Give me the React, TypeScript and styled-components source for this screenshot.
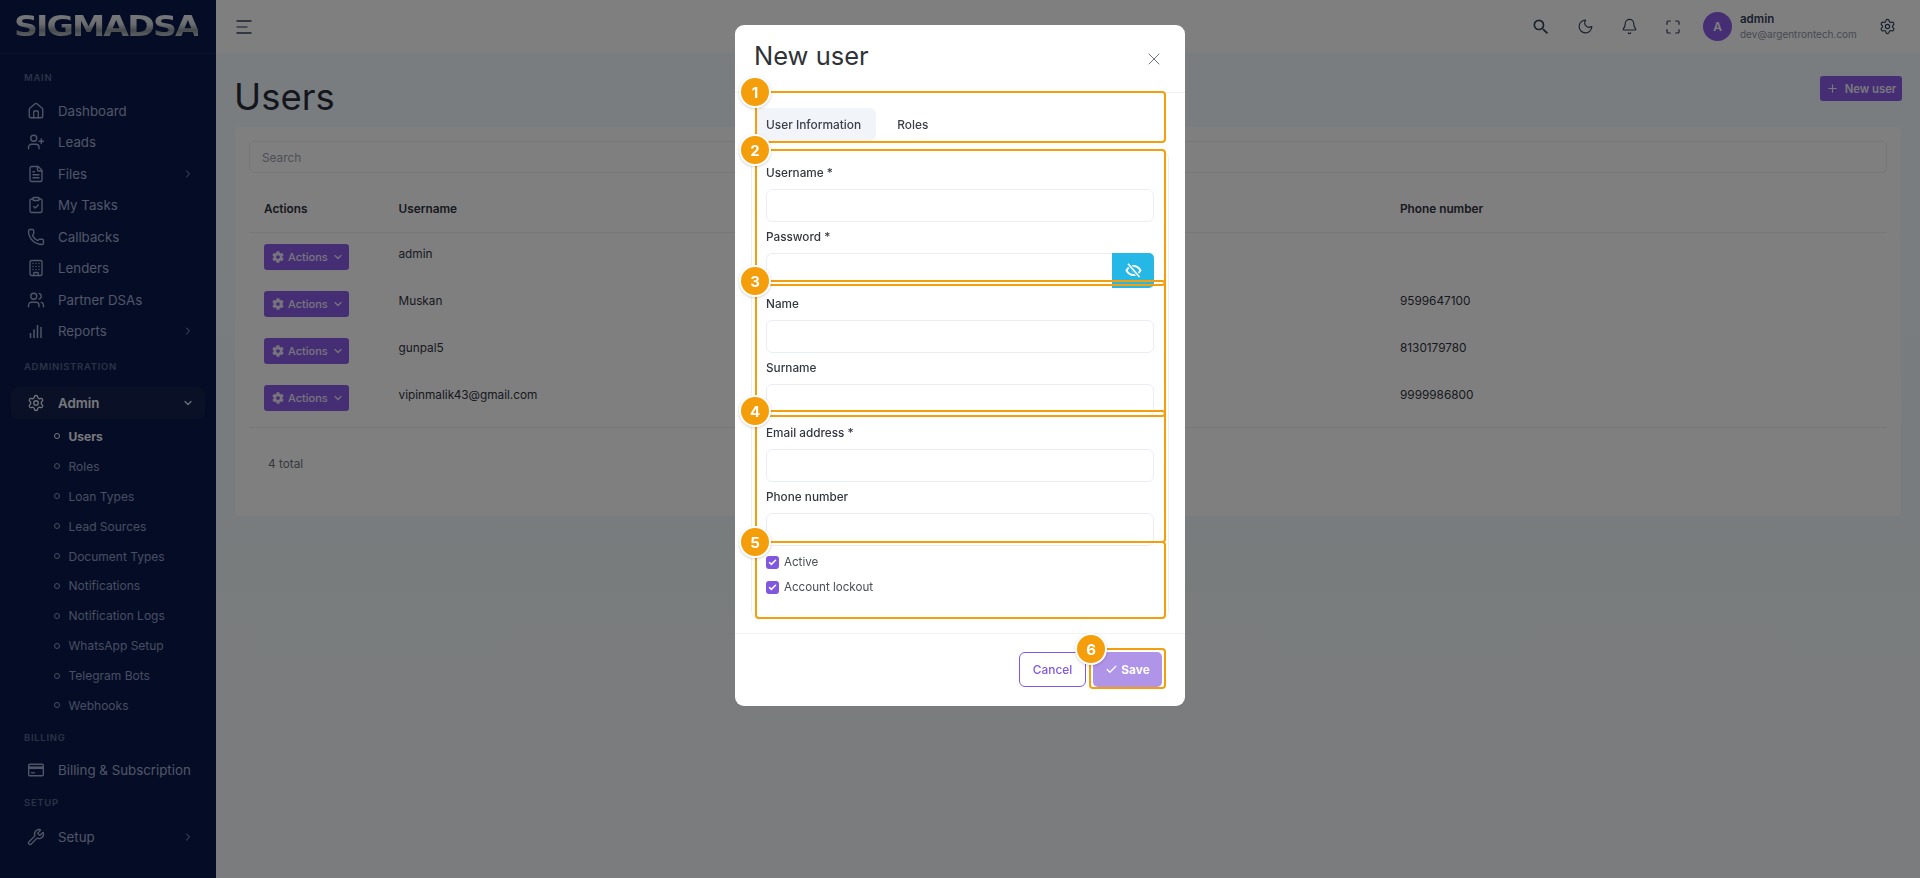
import React from 'react';
import styled, { createGlobalStyle } from 'styled-components';
import { Home, UserPlus, FileText, ClipboardCheck, Phone, Building, Users as UsersIcon, ChevronRight, ChevronDown, Settings, Wrench, Moon, Bell, Maximize, Plus, X, Check } from 'lucide-react';
import { FaCog } from 'react-icons/fa';
import { MdSearch } from 'react-icons/md';

const Global = createGlobalStyle`
  html, body { margin: 0; padding: 0; height: 100%; overflow: hidden; }
  body { font-family: Inter, "Liberation Sans", sans-serif; color: #2a2f3a; background: #f3f8fb; }
  * { box-sizing: border-box; }
`;

const Shell = styled.div`display: flex; width: 1920px; height: 878px; overflow: hidden;`;
const Sidebar = styled.aside`width: 216px; flex: none; background: #0a1a4c; display: flex; flex-direction: column;`;
const Brand = styled.div`height: 54px; flex: none; border-bottom: 1px solid #16265a; padding: 0 0 0 14px; display: flex; align-items: center;`;
const BrandText = styled.span`
  display: inline-block; font-family: "DejaVu Sans", sans-serif; font-weight: 700; font-size: 28px; line-height: 1; letter-spacing: -1.6px;
  transform: scaleX(1.19); transform-origin: left center;
  background: linear-gradient(180deg, #f4f6f8 0%, #d5dade 40%, #8e979e 62%, #e3e6e9 100%);
  -webkit-background-clip: text; background-clip: text; color: transparent;
`;
const Nav = styled.nav`padding: 16px 11px 0; display: flex; flex-direction: column;`;
const SectionLabel = styled.div<{ $gap?: number; $after?: number }>`
  height: 16px; line-height: 16px; margin: ${p => p.$gap ?? 0}px 0 ${p => p.$after ?? 9}px 13px; font-size: 9.5px; font-weight: 600; letter-spacing: 0.7px; color: #56668f;
`;
const NavItem = styled.div<{ $active?: boolean }>`
  height: 31.5px; flex: none; display: flex; align-items: center; padding: 0 11px 0 16px; gap: 13px; border-radius: 8px;
  font-size: 13.3px; font-weight: ${p => (p.$active ? 600 : 400)};
  color: ${p => (p.$active ? '#f0f2f7' : '#a0acce')}; background: ${p => (p.$active ? '#15234f' : 'transparent')};
  svg { flex: none; color: ${p => (p.$active ? '#dfe4ef' : '#a0acce')}; }
`;
const NavText = styled.span`flex: 1; white-space: nowrap;`;
const SubList = styled.div`margin-top: 3px; display: flex; flex-direction: column;`;
const SubItem = styled.div<{ $active?: boolean }>`
  height: 29.9px; display: flex; align-items: center; padding-left: 42.5px; gap: 9px; font-size: 12px; font-weight: ${p => (p.$active ? 700 : 400)};
  color: ${p => (p.$active ? '#f0f2f7' : '#8f9cc2')};
  &::before { content: ''; width: 4px; height: 4px; border-radius: 50%; border: 1px solid currentColor; flex: none; }
`;
const NavGlyph = styled.svg`flex: none;`;

const Main = styled.div`flex: 1; display: flex; flex-direction: column; min-width: 0;`;
const Topbar = styled.header`height: 53px; flex: none; background: #fff; display: flex; align-items: center; padding: 0 24px 0 20px;`;
const Burger = styled.svg`flex: none;`;
const TopRight = styled.div`margin-left: auto; display: flex; align-items: center; color: #33405c;`;
const TopIcon = styled.div`width: 44px; display: flex; justify-content: center;`;
const Profile = styled.div`display: flex; align-items: center; gap: 8px; margin: 0 0 0 8px; width: 176px;`;
const Avatar = styled.div`width: 29px; height: 29px; border-radius: 50%; background: #8a5ce8; color: #fff; font-size: 12px; font-weight: 600; display: flex; align-items: center; justify-content: center;`;
const ProfileText = styled.div`display: flex; flex-direction: column; gap: 1px;`;
const ProfileName = styled.div`font-size: 11.5px; font-weight: 600; line-height: 14px; color: #33405c;`;
const ProfileMail = styled.div`font-size: 10px; line-height: 14px; color: #8b93a7;`;
const Content = styled.main`flex: 1; padding: 0 19px; background: linear-gradient(180deg, #f2fafe 0%, #f4f8fa 100%);`;
const PageHead = styled.div`height: 74px; display: flex; align-items: center; justify-content: space-between;`;
const PageTitle = styled.h1`margin: 14px 0 0 -1px; font-size: 36.5px; font-weight: 400; color: #2a2d3a; line-height: 1;`;
const PrimaryButton = styled.button`
  height: 25px; width: 82px; border: 0; border-radius: 3px; background: #8a5ce8; color: #f3eefc; font: 600 11.3px Inter, sans-serif;
  display: inline-flex; align-items: center; justify-content: center; gap: 6px; padding: 0; margin: 0 -1px 3px 0;
`;
const Card = styled.section`height: 389px; background: #fff; border-radius: 5px; padding: 14px; display: flex; flex-direction: column;`;
const SearchBox = styled.div`height: 32px; flex: none; border: 1px solid #eceef3; border-radius: 5px; padding: 1px 12px 0; font-size: 11.8px; line-height: 30px; color: #9aa1ad;`;
const TableRow = styled.div<{ $head?: boolean }>`
  display: grid; grid-template-columns: 134.5px 1001.5px 1fr; padding-left: 15px; font-size: 11.8px; color: #2f3340;
  height: ${p => (p.$head ? '60px' : '47px')};
  align-items: ${p => (p.$head ? 'center' : 'start')};
  padding-top: ${p => (p.$head ? '12px' : '11px')};
  ${p => p.$head ? 'border-bottom: 1px solid #eef0f4; font-weight: 600;' : ''}
`;
const Cell = styled.div`line-height: 18px; margin-top: 1px;`;
const ActionButton = styled.button`
  height: 26px; width: 85px; border: 0; border-radius: 3px; background: #8a5ce8; color: #efe9fb; font: 500 11px Inter, sans-serif;
  display: flex; align-items: center; padding: 0 0 0 8px; gap: 4px;
`;
const TableEnd = styled.div`margin-top: 6px; border-top: 1px solid #eef0f4; padding: 27px 0 0 19px; font-size: 11.8px; color: #6e7380; line-height: 18px;`;

const Backdrop = styled.div`position: fixed; inset: 0; background: rgba(0,0,0,.5); display: flex; justify-content: center; align-items: flex-start;`;
const Modal = styled.div`position: relative; width: 450px; height: 681px; margin-top: 25px; background: #fff; border-radius: 9px; display: flex; flex-direction: column;`;
const ModalHead = styled.div`height: 68px; flex: none; border-bottom: 1px solid #f1f2f5; padding: 0 21px 0 20px; display: flex; align-items: center; justify-content: space-between; color: #6b7280;`;
const ModalTitle = styled.h2`margin: 0 0 6px -1px; font-size: 25.5px; font-weight: 400; color: #2f3338; line-height: 1;`;
const ModalBody = styled.div`flex: 1; padding: 15px 16px 0; display: flex; flex-direction: column;`;
const Tabs = styled.div`display: flex; gap: 11px; height: 33px; padding-left: 5px; flex: none;`;
const Tab = styled.div<{ $active?: boolean }>`
  padding: 0 15px 0 10px; border-radius: 6px; display: flex; align-items: center; font-size: 11.9px; font-weight: 500; color: #3b3f47; background: ${p => (p.$active ? '#f1f4f8' : 'transparent')};
`;
const FormCard = styled.div`margin-top: 9px; height: 469px; border: 1px solid #f0f1f5; border-radius: 8px; padding: 13px 14px 0; display: flex; flex-direction: column;`;
const Field = styled.div<{ $h?: number }>`height: ${p => p.$h ?? 64}px; flex: none; display: flex; flex-direction: column;`;
const FieldLabel = styled.label`height: 17px; line-height: 17px; margin: 1px 0 7px; font-size: 11.75px; font-weight: 500; color: #33373f;`;
const TextInput = styled.input`height: 33px; width: 100%; border: 1px solid #ebedf6; border-radius: 6px; background: #fff; outline: 0; padding: 0 10px; flex: none;`;
const InputGroup = styled.div`display: flex; height: 35px;`;
const GroupInput = styled(TextInput)`flex: 1; border-right: 0; border-radius: 6px 0 0 6px; min-width: 0;`;
const EyeButton = styled.button`width: 42px; height: 35px; border: 0; background: #25b8e6; color: #fff; border-radius: 0 5px 5px 0; display: flex; align-items: center; justify-content: center; padding: 0; flex: none;`;
const CheckRow = styled.label`height: 25px; display: flex; align-items: flex-start; gap: 5px; font-size: 11.6px; color: #4a4e57; line-height: 12.5px;`;
const CheckBox = styled.span`width: 13px; height: 13px; border-radius: 3px; background: #8257e0; color: #fff; display: flex; align-items: center; justify-content: center; flex: none;`;
const Checks = styled.div`margin-top: 3px; display: flex; flex-direction: column;`;
const ModalFoot = styled.div`height: 73px; flex: none; border-top: 1px solid #f1f2f5; margin: 14px -16px 0; padding: 18px 23px 0 0; display: flex; justify-content: flex-end; gap: 7px;`;
const CancelButton = styled.button`width: 67px; height: 35px; background: #fff; border: 1px solid #8257e0; border-radius: 6px; color: #8257e0; font: 500 11.9px Inter, sans-serif; padding: 0;`;
const SaveButton = styled.button`width: 69px; height: 35px; background: #af94e8; border: 0; border-radius: 5px; color: #fff; font: 700 11.9px Inter, sans-serif; padding: 0; display: flex; align-items: center; justify-content: center; gap: 3px;`;

const Highlight = styled.div<{ $x: number; $y: number; $w: number; $h: number }>`
  position: absolute; left: ${p => p.$x}px; top: ${p => p.$y}px; width: ${p => p.$w}px; height: ${p => p.$h}px;
  border: 2px solid #f59e0b; border-radius: 4px; pointer-events: none;
`;
const Badge = styled.div<{ $x: number; $y: number }>`
  position: absolute; left: ${p => p.$x - 16}px; top: ${p => p.$y - 16}px; width: 32px; height: 32px; border-radius: 50%;
  background: #f59e0b; border: 2.5px solid #fff; box-shadow: 0 1px 3px rgba(0,0,0,.18); color: #fff; font: 700 15px Inter, sans-serif; display: flex; align-items: center; justify-content: center;
`;

const ReportsIcon = () => (
  <NavGlyph width="18" height="18" viewBox="0 0 18 18" fill="none" stroke="currentColor" strokeWidth="1.5">
    <path d="M3.5 16V11M7 16V7.5M10.5 16V3M14 16V5" />
  </NavGlyph>
);
const BillingIcon = () => (
  <NavGlyph width="18" height="18" viewBox="0 0 18 18" fill="none" stroke="currentColor">
    <rect x="1.7" y="3.2" width="14.6" height="11.6" rx="1" strokeWidth="1.4" />
    <path d="M2 6.7H16" strokeWidth="2.6" />
    <path d="M4 11.8H8" strokeWidth="1.3" />
  </NavGlyph>
);
const EyeSlash = () => (
  <svg width="17" height="17" viewBox="0 0 17 17" fill="none" stroke="#fff">
    <path d="M1.5 8.5S4 4 8.5 4s7 4.5 7 4.5S13 13 8.5 13s-7-4.5-7-4.5z" strokeWidth="1.9" />
    <circle cx="8.5" cy="8.5" r="1.5" fill="#fff" strokeWidth="0.6" />
    <path d="M3 1.8 14.5 15" stroke="#25b8e6" strokeWidth="3.6" />
    <path d="M3 1.8 14.5 15" strokeWidth="1.6" />
  </svg>
);

const iconProps = { size: 18, strokeWidth: 1.8 };
const main = [
  { label: 'Dashboard', icon: <Home {...iconProps} /> },
  { label: 'Leads', icon: <UserPlus {...iconProps} /> },
  { label: 'Files', icon: <FileText {...iconProps} />, more: true },
  { label: 'My Tasks', icon: <ClipboardCheck {...iconProps} /> },
  { label: 'Callbacks', icon: <Phone {...iconProps} /> },
  { label: 'Lenders', icon: <Building {...iconProps} /> },
  { label: 'Partner DSAs', icon: <UsersIcon {...iconProps} /> },
  { label: 'Reports', icon: <ReportsIcon />, more: true },
];
const subs = ['Users', 'Roles', 'Loan Types', 'Lead Sources', 'Document Types', 'Notifications', 'Notification Logs', 'WhatsApp Setup', 'Telegram Bots', 'Webhooks'];
const rows = [
  { name: 'admin', phone: '' },
  { name: 'Muskan', phone: '9599647100' },
  { name: 'gunpal5', phone: '8130179780' },
  { name: 'vipinmalik43@gmail.com', phone: '9999986800' },
];
const fields = [
  { label: 'Username *', h: 64 },
  { label: 'Password *', h: 67, secret: true },
  { label: 'Name', h: 64 },
  { label: 'Surname', h: 65 },
  { label: 'Email address *', h: 64 },
  { label: 'Phone number', h: 65 },
];
const highlights = [
  { x: 20, y: 66, w: 411, h: 52 },
  { x: 20, y: 124, w: 411, h: 137 },
  { x: 20, y: 255, w: 411, h: 137 },
  { x: 20, y: 385, w: 411, h: 133 },
  { x: 20, y: 516, w: 411, h: 78 },
  { x: 354, y: 623, w: 77, h: 41 },
];
const badges = [
  { n: 1, x: 20, y: 67 }, { n: 2, x: 20, y: 125 }, { n: 3, x: 20, y: 256 },
  { n: 4, x: 20, y: 386 }, { n: 5, x: 20, y: 517 }, { n: 6, x: 356, y: 624 },
];

export default function App() {
  return (
    <Shell>
      <Global />
      <Sidebar>
        <Brand><BrandText>SIGMADSA</BrandText></Brand>
        <Nav>
          <SectionLabel>MAIN</SectionLabel>
          {main.map(m => (
            <NavItem key={m.label}>
              {m.icon}
              <NavText>{m.label}</NavText>
              {m.more && <ChevronRight size={12} />}
            </NavItem>
          ))}
          <SectionLabel $gap={12} $after={12}>ADMINISTRATION</SectionLabel>
          <NavItem $active>
            <Settings size={18} strokeWidth={1.8} />
            <NavText>Admin</NavText>
            <ChevronDown size={12} strokeWidth={2.4} />
          </NavItem>
          <SubList>
            {subs.map((s, i) => <SubItem key={s} $active={i === 0}>{s}</SubItem>)}
          </SubList>
          <SectionLabel $gap={10} $after={8}>BILLING</SectionLabel>
          <NavItem><BillingIcon /><NavText>Billing &amp; Subscription</NavText></NavItem>
          <SectionLabel $gap={9} $after={10}>SETUP</SectionLabel>
          <NavItem><Wrench {...iconProps} /><NavText>Setup</NavText><ChevronRight size={12} /></NavItem>
        </Nav>
      </Sidebar>
      <Main>
        <Topbar>
          <Burger width="16" height="14" viewBox="0 0 16 14" stroke="#33405c">
            <path d="M0.5 1H15.5M0.5 13H15.5" strokeWidth="1.6" />
            <path d="M0.5 7H11.5" strokeWidth="1.1" />
          </Burger>
          <TopRight>
            <TopIcon><MdSearch size={20} /></TopIcon>
            <TopIcon><Moon size={17} strokeWidth={1.6} /></TopIcon>
            <TopIcon><Bell size={17} strokeWidth={1.6} /></TopIcon>
            <TopIcon><Maximize size={16} strokeWidth={1.8} /></TopIcon>
            <Profile>
              <Avatar>A</Avatar>
              <ProfileText>
                <ProfileName>admin</ProfileName>
                <ProfileMail>dev@argentrontech.com</ProfileMail>
              </ProfileText>
            </Profile>
            <Settings size={17} strokeWidth={1.7} />
          </TopRight>
        </Topbar>
        <Content>
          <PageHead>
            <PageTitle>Users</PageTitle>
            <PrimaryButton><Plus size={13} />New user</PrimaryButton>
          </PageHead>
          <Card>
            <SearchBox>Search</SearchBox>
            <TableRow $head>
              <Cell>Actions</Cell><Cell>Username</Cell><Cell>Phone number</Cell>
            </TableRow>
            {rows.map(r => (
              <TableRow key={r.name}>
                <ActionButton><FaCog size={12} />Actions<ChevronDown size={12} strokeWidth={2.4} /></ActionButton>
                <Cell>{r.name}</Cell>
                <Cell>{r.phone}</Cell>
              </TableRow>
            ))}
            <TableEnd>4 total</TableEnd>
          </Card>
        </Content>
      </Main>
      <Backdrop>
        <Modal>
          <ModalHead>
            <ModalTitle>New user</ModalTitle>
            <X size={20} strokeWidth={1.2} />
          </ModalHead>
          <ModalBody>
            <Tabs>
              <Tab $active>User Information</Tab>
              <Tab>Roles</Tab>
            </Tabs>
            <FormCard>
              {fields.map(f => (
                <Field key={f.label} $h={f.h}>
                  <FieldLabel>{f.label}</FieldLabel>
                  {f.secret
                    ? <InputGroup><GroupInput /><EyeButton><EyeSlash /></EyeButton></InputGroup>
                    : <TextInput />}
                </Field>
              ))}
              <Checks>
                <CheckRow><CheckBox><Check size={9} strokeWidth={4} /></CheckBox>Active</CheckRow>
                <CheckRow><CheckBox><Check size={9} strokeWidth={4} /></CheckBox>Account lockout</CheckRow>
              </Checks>
            </FormCard>
            <ModalFoot>
              <CancelButton>Cancel</CancelButton>
              <SaveButton><Check size={13} strokeWidth={2.4} />Save</SaveButton>
            </ModalFoot>
          </ModalBody>
          {highlights.map((h, i) => <Highlight key={i} $x={h.x} $y={h.y} $w={h.w} $h={h.h} />)}
          {badges.map(b => <Badge key={b.n} $x={b.x} $y={b.y}>{b.n}</Badge>)}
        </Modal>
      </Backdrop>
    </Shell>
  );
}
